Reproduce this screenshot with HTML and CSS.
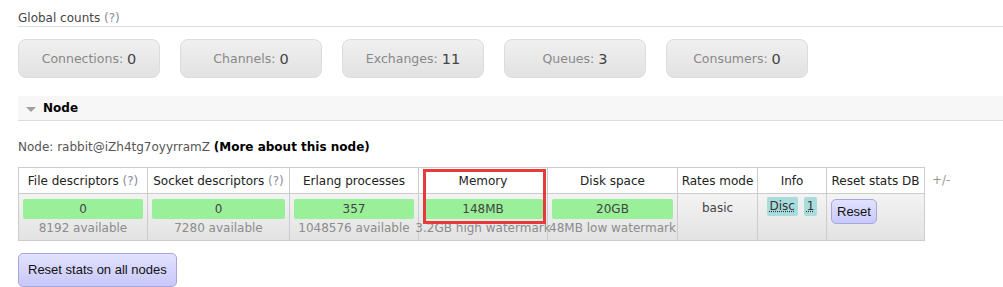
FILE: index.html
```html
<!DOCTYPE html>
<html>

<head>
    <meta name="viewport" content="width=device-width, initial-scale=1">
    <link rel="stylesheet" href="styles.css">
</head>

<body>
    <div id="main">
        <h3 class="section-title">Global counts <span class="help">(?)</span></h3>
        <div class="counts">
            <div class="count-box">Connections: <strong>0</strong></div>
            <div class="count-box">Channels: <strong>0</strong></div>
            <div class="count-box">Exchanges: <strong>11</strong></div>
            <div class="count-box">Queues: <strong>3</strong></div>
            <div class="count-box">Consumers: <strong>0</strong></div>
        </div>

        <div class="node-header"><span class="arrow"></span>Node</div>

        <p class="node-name">Node: rabbit@iZh4tg7oyyrramZ <b>(More about this node)</b></p>

        <div class="table-wrap">
            <table class="node-table">
                <thead>
                    <tr>
                        <th class="c-fd">File descriptors <span class="help">(?)</span></th>
                        <th class="c-sd">Socket descriptors <span class="help">(?)</span></th>
                        <th class="c-ep">Erlang processes</th>
                        <th class="c-mem">Memory</th>
                        <th class="c-disk">Disk space</th>
                        <th class="c-rates">Rates mode</th>
                        <th class="c-info">Info</th>
                        <th class="c-reset">Reset stats DB</th>
                    </tr>
                </thead>
                <tbody>
                    <tr>
                        <td>
                            <div class="bar">0</div>
                            <div class="sub">8192 available</div>
                        </td>
                        <td>
                            <div class="bar">0</div>
                            <div class="sub">7280 available</div>
                        </td>
                        <td>
                            <div class="bar">357</div>
                            <div class="sub">1048576 available</div>
                        </td>
                        <td>
                            <div class="bar"><span class="fill" style="width: 2%"></span>148MB</div>
                            <div class="sub">3.2GB high watermark</div>
                        </td>
                        <td>
                            <div class="bar">20GB</div>
                            <div class="sub">48MB low watermark</div>
                        </td>
                        <td class="rates">basic</td>
                        <td class="info">
                            <span class="badge">Disc</span>
                            <span class="badge">1</span>
                        </td>
                        <td class="reset">
                            <button class="btn">Reset</button>
                        </td>
                    </tr>
                </tbody>
            </table>
            <span class="toggle">+/-</span>
            <div class="highlight-box"></div>
        </div>

        <button class="btn btn-big">Reset stats on all nodes</button>
    </div>
</body>

</html>
```

FILE: styles.css
```css
body {
    margin: 0;
    font-family: "DejaVu Sans", Verdana, sans-serif;
    font-size: 12px;
    color: #444;
    background-color: white;
    overflow: hidden;
}

#main {
    padding: 0 0 0 18px;
}

.help {
    color: #8a8a9a;
}

.section-title {
    margin: 0;
    padding-top: 10px;
    font-size: 12px;
    font-weight: normal;
    line-height: 16px;
    border-bottom: 1px solid #ddd;
}

/* Global count boxes */
.counts {
    display: flex;
    gap: 20px;
    margin-top: 12px;
}

.count-box {
    box-sizing: border-box;
    width: 142px;
    height: 39px;
    border: 1px solid #dcdcdc;
    border-radius: 8px;
    background: linear-gradient(#f0f0f0, #e2e2e2);
    color: #888;
    font-size: 12.5px;
    display: flex;
    align-items: center;
    justify-content: center;
    gap: 4px;
}

.count-box strong {
    color: #444;
    font-weight: normal;
    font-size: 14.5px;
}

/* Node section header */
.node-header {
    margin-top: 18px;
    height: 24px;
    line-height: 24px;
    background-color: #f7f7f7;
    border-bottom: 1px solid #ddd;
    font-weight: bold;
    color: #000;
    display: flex;
    align-items: center;
}

.arrow {
    width: 0;
    height: 0;
    border-left: 5px solid transparent;
    border-right: 5px solid transparent;
    border-top: 5px solid #a0a0a0;
    margin: 2px 7px 0 8px;
}

.node-name {
    margin: 18px 0 0 0;
    line-height: 16px;
    color: #555;
}

.node-name b {
    color: #000;
}

/* Node table */
.table-wrap {
    position: relative;
    display: flex;
    align-items: flex-start;
    margin-top: 12px;
}

.node-table {
    table-layout: fixed;
    width: 907px;
    border-collapse: separate;
    border-spacing: 0;
    border-right: 1px solid #ccc;
    border-bottom: 1px solid #ccc;
}

.node-table th,
.node-table td {
    box-sizing: border-box;
    border-left: 1px solid #ccc;
    border-top: 1px solid #ccc;
    padding: 0;
    text-align: center;
    white-space: nowrap;
}

.node-table th {
    height: 26px;
    font-weight: normal;
    color: #222;
    background-color: white;
}

.c-fd { width: 129px; }
.c-sd { width: 142px; }
.c-ep { width: 129px; }
.c-mem { width: 129px; }
.c-disk { width: 130px; }
.c-rates { width: 80px; }
.c-info { width: 69px; }
.c-reset { width: 98px; }

.node-table td {
    height: 47px;
    vertical-align: top;
    padding: 5px 4px 0 4px;
    background: linear-gradient(#f3f3f3, #e3e3e3);
}

.bar {
    position: relative;
    height: 20px;
    line-height: 20px;
    background-color: #99f099;
    border-radius: 2px;
    color: #444;
    overflow: hidden;
}

.fill {
    position: absolute;
    left: 0;
    top: 0;
    bottom: 0;
    background-color: #5ccc5c;
}

.sub {
    display: flex;
    justify-content: center;
    line-height: 19px;
    color: #8c8c8c;
    white-space: nowrap;
}

.node-table td.rates {
    padding-top: 6px;
    line-height: 16px;
}

.node-table td.info {
    padding-top: 3px;
}

.badge {
    display: inline-block;
    height: 19px;
    line-height: 19px;
    padding: 0 3px;
    margin: 0 1px;
    background-color: #a9dcdc;
    border-radius: 2px;
    color: #333;
    text-decoration: underline dotted;
}

.node-table td.reset {
    text-align: left;
    padding-left: 4px;
    padding-top: 5px;
}

.btn {
    font-family: "Liberation Sans", Arial, sans-serif;
    font-size: 13px;
    line-height: 15px;
    color: #111;
    padding: 4px 5px;
    border: 1px solid #a6a6dc;
    border-radius: 5px;
    background: linear-gradient(#e2e2ff, #c8c8fa);
    cursor: pointer;
}

.btn-big {
    margin-top: 12px;
    padding: 8px 9px;
    line-height: 16px;
}

.toggle {
    margin-left: 7px;
    margin-top: 6px;
    color: #999;
}

/* annotation drawn round the memory column */
.highlight-box {
    position: absolute;
    left: 405px;
    top: 2px;
    width: 123px;
    height: 55px;
    box-sizing: border-box;
    border: 3px solid #e83a3a;
}
```
